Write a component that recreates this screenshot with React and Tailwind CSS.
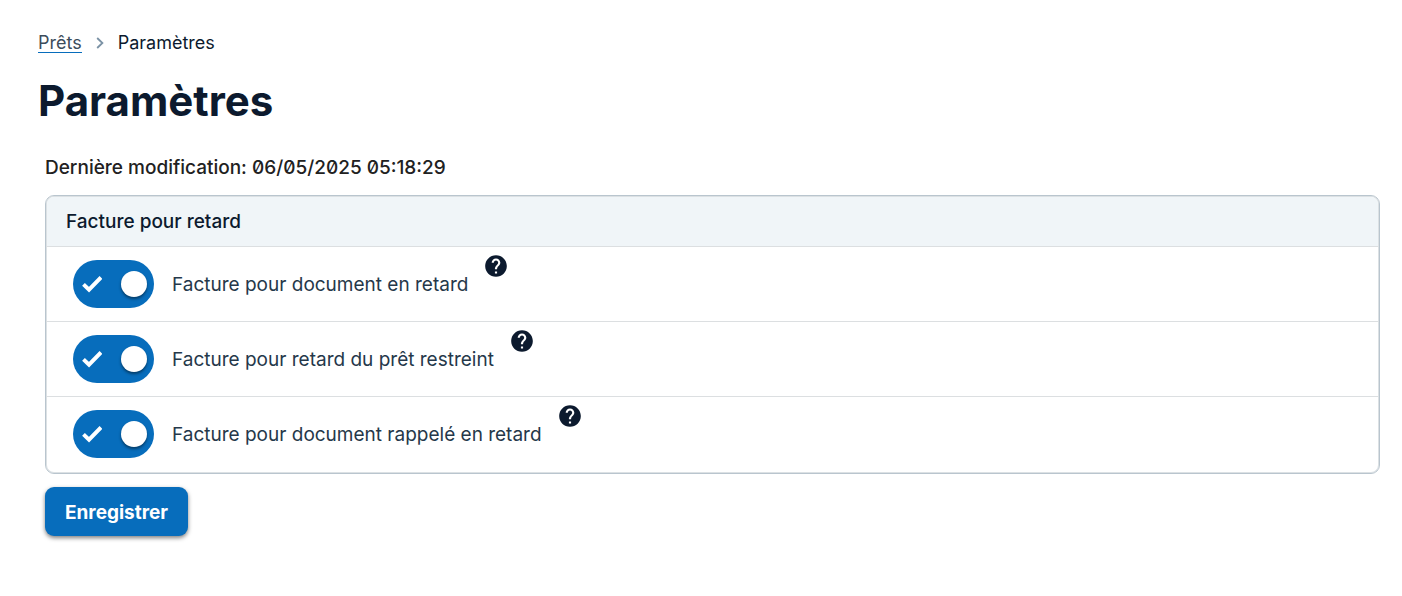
import { useState } from "react";
import { MdHelp } from "react-icons/md";

const options = [
  { id: "overdue", label: "Facture pour document en retard" },
  { id: "reserve", label: "Facture pour retard du prêt restreint" },
  { id: "recalled", label: "Facture pour document rappelé en retard" },
];

function Toggle({ id, checked, onChange }) {
  return (
    <span className="relative block h-12 w-[81px] shrink-0">
      <input
        id={id}
        type="checkbox"
        role="switch"
        checked={checked}
        onChange={onChange}
        className="peer block h-full w-full cursor-pointer appearance-none rounded-full bg-slate-400 checked:bg-[#076dbc]"
      />
      <svg
        viewBox="0 0 20 17"
        fill="none"
        stroke="white"
        strokeWidth="4"
        aria-hidden="true"
        className="pointer-events-none absolute top-4 left-[9px] hidden h-[17px] w-5 peer-checked:block"
      >
        <path d="M1.5 8.4 7 13.6 19 1.4" />
      </svg>
      <span className="pointer-events-none absolute top-[11px] left-2 size-[26px] rounded-full bg-white shadow-[0_2px_3px_rgba(0,0,0,0.45)] peer-checked:right-[7px] peer-checked:left-auto" />
    </span>
  );
}

function OptionRow({ option }) {
  const [checked, setChecked] = useState(true);
  return (
    <div className="flex items-center border-t border-[#dcdfe1] px-[27px] py-[13px]">
      <Toggle id={option.id} checked={checked} onChange={() => setChecked(!checked)} />
      <label htmlFor={option.id} className="ml-[18px] pt-0.5 text-[19px] leading-6 text-[#25384a]">
        {option.label}
      </label>
      <button type="button" aria-label="Aide" className="-mt-[7px] ml-[15px] cursor-pointer self-start text-[#0c1a2e]">
        <MdHelp className="size-[26px]" />
      </button>
    </div>
  );
}

export default function App() {
  return (
    <main className="bg-white pt-[33px] pr-[22px] pb-14 pl-[38px] font-['Inter',sans-serif] text-[#0c1a2e]">
      <nav aria-label="Fil d’Ariane" className="flex items-center text-lg leading-[19px]">
        <a href="#prets" className="border-b border-[#076dbc] text-[#3c4c5b]">
          Prêts
        </a>
        <svg viewBox="0 0 8 12" fill="none" stroke="#7b92a5" strokeWidth="1.8" aria-hidden="true" className="mx-[14px] h-3 w-2">
          <path d="M1.2 1 6.4 6 1.2 11" />
        </svg>
        <span className="border-b border-transparent">Paramètres</span>
      </nav>
      <h1 className="mt-5 text-[42px] leading-14 font-bold">Paramètres</h1>
      <form className="mt-[27px] ml-[7px]" onSubmit={(event) => event.preventDefault()}>
        <p className="text-[19px] leading-6 font-medium text-[#212121] slashed-zero">
          Dernière modification: 06/05/2025 05:18:29
        </p>
        <section className="mt-[15px] overflow-hidden rounded-[9px] border border-[#b9c5ce] pb-0.5 shadow-[inset_0_0_0_1px_#dce1e4]">
          <h2 className="mx-px mt-px rounded-t-[7px] bg-[#f0f5f8] px-[19px] pt-[13px] pb-3 text-[19px] leading-6 font-medium">
            Facture pour retard
          </h2>
          {options.map((option) => (
            <OptionRow key={option.id} option={option} />
          ))}
        </section>
        <button
          type="submit"
          className="mt-[13px] h-[49px] cursor-pointer rounded-[9px] bg-[#076dbc] px-5 pt-0.5 text-[19px] leading-6 font-bold text-white shadow-[0_2px_4px_rgba(0,0,0,0.5)]"
        >
          Enregistrer
        </button>
      </form>
    </main>
  );
}
